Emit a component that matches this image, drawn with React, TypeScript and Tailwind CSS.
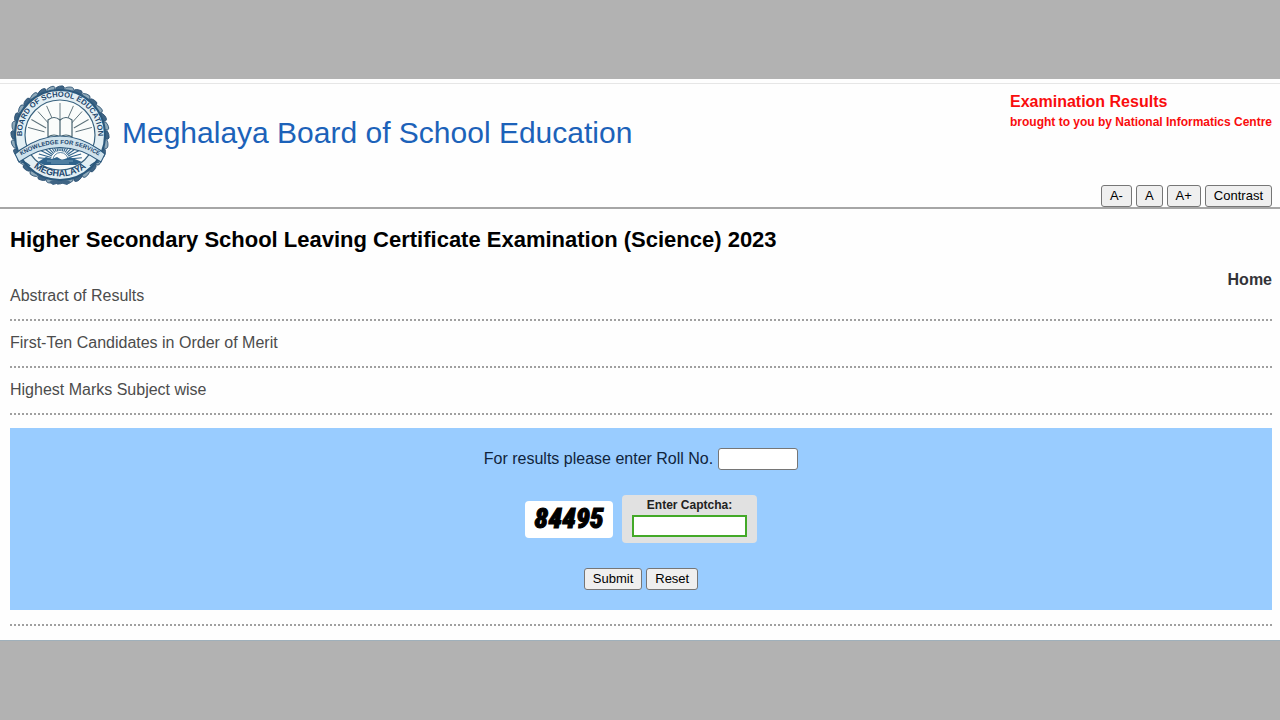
import { useState } from "react";
import type { ButtonHTMLAttributes } from "react";

const REPORTS = [
  "Abstract of Results",
  "First-Ten Candidates in Order of Merit",
  "Highest Marks Subject wise",
];

const RAY_ANGLES = [-75, -60, -42, -24, 0, 24, 42, 60, 75];
const SUN_ANGLES = [-84, -74, -64, -54, -44, -34, -24, -14, -5, 5, 14, 24, 34, 44, 54, 64, 74, 84];
const LEAF_ANGLES = Array.from({ length: 32 }, (_, index) => index * 11.25);

function BoardSeal() {
  return (
    <svg aria-label="Meghalaya Board of School Education seal" className="h-[102px] w-[102px] shrink-0" role="img" viewBox="0 0 102 102">
      <defs>
        <path d="M13.5 57A38 38 0 1 1 88.5 57" id="seal-top" />
        <path d="M16 74A42.5 42.5 0 0 0 86 74" id="seal-bottom" />
        <path d="M7 75Q51 45 95 75" id="seal-ribbon" />
      </defs>

      {/* wreath */}
      {LEAF_ANGLES.map((angle) => (
        <ellipse
          cx="51"
          cy="4.5"
          fill={angle % 22.5 === 0 ? "#3f6484" : "#8fa9b9"}
          key={angle}
          rx="4.5"
          ry="2.4"
          stroke="#2a5072"
          strokeWidth="0.8"
          transform={`rotate(${angle} 51 51) rotate(-14 51 4.5)`}
        />
      ))}
      <circle cx="51" cy="51" fill="#e3eff4" r="45" stroke="#2b587c" strokeWidth="2" />
      <circle cx="51" cy="51" fill="#fafcfb" r="35" stroke="#3a637f" strokeWidth="1.2" />

      {/* rays behind the book */}
      {RAY_ANGLES.map((angle) => (
        <path d="M51 36V19" key={angle} stroke="#5a6f78" strokeWidth="0.9" transform={`rotate(${angle} 51 52)`} />
      ))}
      <path
        d="M39 53V36Q45 31 51 36Q57 31 63 36V53Q57 49 51 53Q45 49 39 53Z"
        fill="#fafcfb"
        stroke="#46626f"
        strokeWidth="1.2"
      />
      <path d="M51 36V53" stroke="#46626f" strokeWidth="1.2" />

      {/* rising sun */}
      {SUN_ANGLES.map((angle) => (
        <path d="M51 67V54" key={angle} stroke="#2f638b" strokeWidth="1.1" transform={`rotate(${angle} 51 76)`} />
      ))}
      <path d="M44 76A7.5 7.5 0 0 1 59 76Z" fill="#fafcfb" stroke="#2f638b" strokeWidth="0.8" />
      <path d="M29 78L37 73L43 75L48 73L53 76L61 73L73 78L67 81H35Z" fill="#2f638b" />
      <path d="M38 77H64M42 79H60" stroke="#8cb4cc" strokeWidth="0.7" />

      {/* ribbon */}
      <path
        d="M6 70L11 66Q51 38 91 66L96 70L92 78Q51 49 10 78Z"
        fill="#cfe2ec"
        stroke="#2b587c"
        strokeWidth="1.1"
      />
      <path d="M12 78Q17 78 21 82M90 78Q85 78 81 82" fill="none" stroke="#2b587c" strokeWidth="1.6" />
      <path d="M40 98Q46 94 51 98Q56 94 62 98L58 101L51 99L44 101Z" fill="#3f6484" />

      <g fill="#1d476d" fontFamily="Liberation Sans, Arial, sans-serif" fontWeight="700" textAnchor="middle">
        <text fontSize="7.6">
          <textPath href="#seal-top" startOffset="50%">BOARD OF SCHOOL EDUCATION</textPath>
        </text>
        <text fontSize="6">
          <textPath href="#seal-ribbon" startOffset="50%">KNOWLEDGE FOR SERVICE</textPath>
        </text>
        <text fontSize="9">
          <textPath href="#seal-bottom" startOffset="50%">MEGHALAYA</textPath>
        </text>
      </g>
    </svg>
  );
}

function FormButton(props: ButtonHTMLAttributes<HTMLButtonElement>) {
  return (
    <button
      className="h-[22px] rounded-[3px] border border-[#767676] bg-[#efefef] px-2 text-[13px] leading-5 text-black hover:bg-[#e5e5e5]"
      type="button"
      {...props}
    />
  );
}

export default function App() {
  const [rollNo, setRollNo] = useState("");
  const [captcha, setCaptcha] = useState("");

  const handleReset = () => {
    setRollNo("");
    setCaptcha("");
  };

  return (
    <div className="min-h-screen bg-[#b2b2b2] py-[79px] font-['Liberation_Sans',Arial,sans-serif] text-black">
      <div className="border-b border-[#9fb0bb] bg-[#fefefe] pt-1">
        <header className="flex items-stretch justify-between border-t border-b-2 border-t-[#e6e6e6] border-b-[#a6a6a6] pr-2 pl-[9px]">
          <div className="flex items-start gap-[11px] pb-[21px]">
            <BoardSeal />
            <h1 className="pt-[31px] text-[30px] leading-9 text-[#1c62b9]">Meghalaya Board of School Education</h1>
          </div>
          <div className="flex flex-col items-end justify-between">
            <div className="pt-2 font-bold text-[#f90d0d]">
              <p className="text-base leading-5">Examination Results</p>
              <p className="text-xs leading-5">brought to you by National Informatics Centre</p>
            </div>
            <div className="flex gap-1">
              <FormButton>A-</FormButton>
              <FormButton>A</FormButton>
              <FormButton>A+</FormButton>
              <FormButton>Contrast</FormButton>
            </div>
          </div>
        </header>

        <main className="pr-2 pb-[14px] pl-[10px]">
          <h2 className="pt-[17px] text-[22px] leading-7 font-bold">
            Higher Secondary School Leaving Certificate Examination (Science) 2023
          </h2>
          <nav className="flex justify-end pt-[18px]">
            <a className="text-base leading-4 font-bold text-[#333338]" href="#home">
              Home
            </a>
          </nav>

          <ul className="text-base text-[#4c4c4c]">
            {REPORTS.map((report) => (
              <li className="border-b-2 border-dotted border-[#a0a0a0] pb-[15px] not-first:pt-[14px]" key={report}>
                <a className="block w-fit leading-4" href="#report">
                  {report}
                </a>
              </li>
            ))}
          </ul>

          <form
            className="mt-[13px] flex flex-col items-center bg-[#99ccff] pt-5 pb-5"
            onSubmit={(event) => event.preventDefault()}
          >
            <div className="flex items-center gap-[5px]">
              <label className="text-base leading-5 text-[#10243c]" htmlFor="roll-no">
                For results please enter Roll No.
              </label>
              <input
                className="h-[22px] w-20 rounded-[3px] border border-[#767676] bg-white px-1 text-[13px]"
                id="roll-no"
                onChange={(event) => setRollNo(event.target.value)}
                type="text"
                value={rollNo}
              />
            </div>

            <div className="mt-[25px] flex items-center gap-[9px]">
              <div className="flex h-[37px] w-[88px] items-center justify-center rounded-[4px] bg-white">
                <span className="font-['Impact','Liberation_Sans_Narrow','Roboto_Condensed','Liberation_Sans',sans-serif] text-[28px] leading-8 font-black italic [-webkit-text-stroke:1px_black]">
                  84495
                </span>
              </div>
              <div className="flex h-12 w-[135px] flex-col items-center rounded-[4px] bg-[#e1e1e1]">
                <label className="text-xs leading-5 font-bold text-[#222222]" htmlFor="captcha">
                  Enter Captcha:
                </label>
                <input
                  className="h-[22px] w-[115px] border-2 border-[#43a928] bg-white px-1 text-[13px]"
                  id="captcha"
                  onChange={(event) => setCaptcha(event.target.value)}
                  type="text"
                  value={captcha}
                />
              </div>
            </div>

            <div className="mt-[25px] flex gap-1">
              <FormButton type="submit">Submit</FormButton>
              <FormButton onClick={handleReset}>Reset</FormButton>
            </div>
          </form>

          <div className="mt-[14px] border-b-2 border-dotted border-[#a0a0a0]" />
        </main>
      </div>
    </div>
  );
}
